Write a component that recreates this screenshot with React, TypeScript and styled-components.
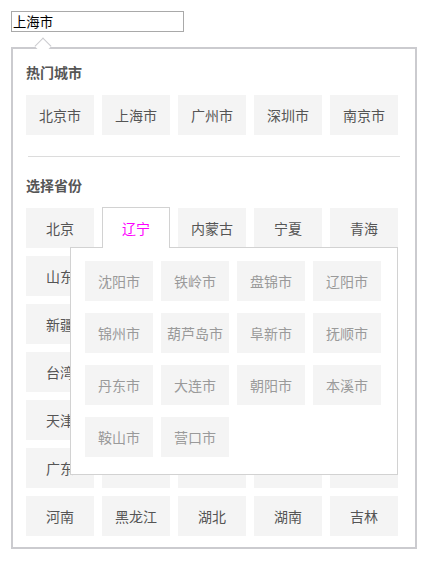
import styled, { createGlobalStyle } from 'styled-components';

const GlobalStyle = createGlobalStyle`
  body {
    margin: 0;
    background: #fff;
    font-family: "Noto Sans CJK SC", "Noto Sans", sans-serif;
  }
`;

const Wrapper = styled.div`
  padding: 11px;
  width: 406px;
`;

const CityInput = styled.input`
  display: block;
  box-sizing: border-box;
  width: 173px;
  height: 21px;
  margin: 0;
  padding: 0 1px;
  border: 1px solid #a9a9a9;
  font-family: "Noto Sans CJK SC", sans-serif;
  font-size: 13.33px;
  color: #000;
  outline: none;
`;

const Panel = styled.div`
  position: relative;
  box-sizing: border-box;
  width: 406px;
  margin-top: 15px;
  padding: 13px 13px 11px;
  border: 2px solid #cbcbcf;
  background: #fff;
`;

const Arrow = styled.span`
  position: absolute;
  top: -9px;
  left: 24px;
  width: 11px;
  height: 11px;
  background: #fff;
  border-top: 1px solid #cbcbcf;
  border-left: 1px solid #cbcbcf;
  transform: rotate(45deg);
`;

const Title = styled.div`
  height: 20px;
  line-height: 20px;
  margin-bottom: 13px;
  font-size: 14px;
  font-weight: bold;
  color: #555;
`;

const Grid = styled.div<{ $cols: number; $rowGap: number }>`
  display: grid;
  grid-template-columns: repeat(${p => p.$cols}, 68px);
  grid-auto-rows: 40px;
  column-gap: 8px;
  row-gap: ${p => p.$rowGap}px;
`;

const Item = styled.div<{ $muted?: boolean }>`
  display: flex;
  align-items: center;
  justify-content: center;
  background: #f4f4f4;
  font-size: 14px;
  color: ${p => (p.$muted ? '#9a9a9a' : '#555')};
  white-space: nowrap;
`;

const Tab = styled.div`
  position: relative;
  z-index: 2;
  box-sizing: border-box;
  height: 41px;
  margin-top: -1px;
  display: flex;
  align-items: center;
  justify-content: center;
  background: #fff;
  border: 1px solid #d2d2d2;
  border-bottom: none;
  font-size: 14px;
  color: #f0f;
`;

const Divider = styled.hr`
  width: 372px;
  height: 1px;
  margin: 21px 0 18px 2px;
  border: none;
  background: #dcdcdc;
`;

const ProvinceArea = styled.div`
  position: relative;
`;

const CityPopup = styled.div`
  position: absolute;
  z-index: 1;
  top: 39px;
  left: 44px;
  box-sizing: border-box;
  width: 328px;
  height: 228px;
  padding: 13px 14px;
  background: #fff;
  border: 1px solid #d2d2d2;
`;

const hotCities = ['北京市', '上海市', '广州市', '深圳市', '南京市'];

// cells under the open city list stay blank
const provinces = [
  '北京', '辽宁', '内蒙古', '宁夏', '青海',
  '山东', '', '', '', '',
  '新疆', '', '', '', '',
  '台湾', '', '', '', '',
  '天津', '', '', '', '',
  '广东', '', '', '', '',
  '河南', '黑龙江', '湖北', '湖南', '吉林',
];

const liaoningCities = [
  '沈阳市', '铁岭市', '盘锦市', '辽阳市',
  '锦州市', '葫芦岛市', '阜新市', '抚顺市',
  '丹东市', '大连市', '朝阳市', '本溪市',
  '鞍山市', '营口市',
];

export default function App() {
  const active = '辽宁';

  return (
    <Wrapper>
      <GlobalStyle />
      <CityInput type="text" defaultValue="上海市" />
      <Panel>
        <Arrow />
        <Title>热门城市</Title>
        <Grid $cols={5} $rowGap={8}>
          {hotCities.map(c => <Item key={c}>{c}</Item>)}
        </Grid>
        <Divider />
        <Title>选择省份</Title>
        <ProvinceArea>
          <Grid $cols={5} $rowGap={8}>
            {provinces.map((p, i) =>
              p === active ? <Tab key={i}>{p}</Tab> : <Item key={i}>{p}</Item>
            )}
          </Grid>
          <CityPopup>
            <Grid $cols={4} $rowGap={12}>
              {liaoningCities.map(c => <Item key={c} $muted>{c}</Item>)}
            </Grid>
          </CityPopup>
        </ProvinceArea>
      </Panel>
    </Wrapper>
  );
}
